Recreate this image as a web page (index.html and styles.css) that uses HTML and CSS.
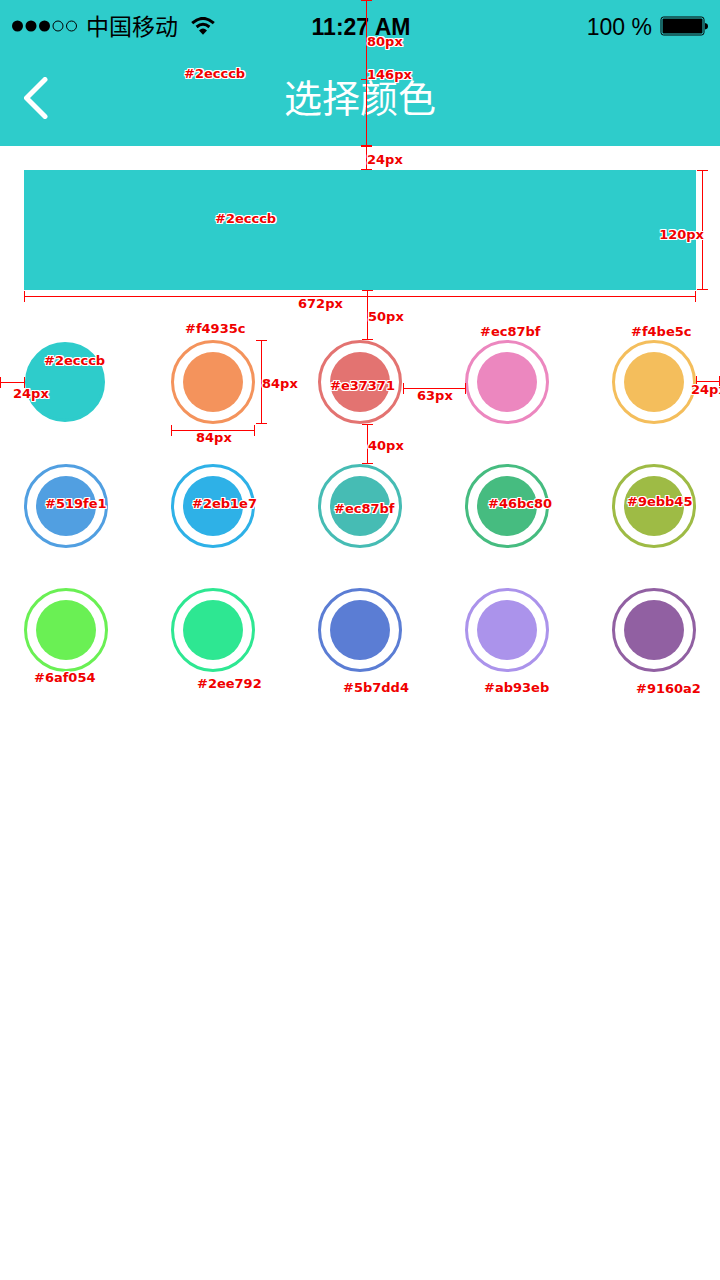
FILE: index.html
```html
<!DOCTYPE html>
<html lang="zh-CN">
<head>
<meta charset="utf-8">
<meta name="viewport" content="width=device-width, initial-scale=1">
<title>选择颜色</title>
<link rel="stylesheet" href="styles.css">
</head>
<body>
<header class="header">
  <div class="status">
    <div class="carrier">
      <svg width="66" height="12" viewBox="0 0 66 12" aria-hidden="true">
        <circle cx="5.5" cy="6" r="5.5"/><circle cx="19" cy="6" r="5.5"/><circle cx="32.5" cy="6" r="5.5"/>
        <circle class="hollow" cx="46" cy="6" r="5"/><circle class="hollow" cx="59.5" cy="6" r="5"/>
      </svg>
      <span class="carrier-name">中国移动</span>
      <svg class="wifi" width="24" height="18" viewBox="0 0 24 18" aria-hidden="true">
        <path class="arc" d="M1.2 6.2Q12 -3.4 22.8 6.2M5.6 10Q12 4.6 18.4 10"/>
        <path d="M8 13.4Q12 9.8 16 13.4L12 17.8Z"/>
      </svg>
    </div>
    <time class="time">11:27 AM</time>
    <div class="power">
      <span>100 %</span>
      <svg width="48" height="20" viewBox="0 0 48 20" aria-hidden="true">
        <rect class="hollow" x="1" y="1" width="43" height="18" rx="2.5"/>
        <rect x="2.5" y="2.5" width="40" height="15" rx="1"/>
        <path d="M45 7q3 .5 3 3.200t-3 3.200z"/>
      </svg>
    </div>
  </div>
  <nav class="nav">
    <button class="back" type="button" aria-label="返回">
      <svg width="24" height="42" viewBox="0 0 24 42" aria-hidden="true"><path d="M21 2.500L2.500 21L21 39.500"/></svg>
    </button>
    <h1 class="title">选择颜色</h1>
  </nav>
  <i class="rule vertical header-80"></i>
  <i class="rule vertical header-146"></i>
  <span class="note note-80">80px</span>
  <span class="note note-146">146px</span>
  <span class="note note-header">#2ecccb</span>
</header>

<main class="content">
  <div class="preview">
    <i class="rule vertical gap-24"></i>
    <span class="note note-gap-24">24px</span>
    <span class="note note-preview">#2ecccb</span>
    <i class="rule vertical height-120"></i>
    <span class="note note-120">120px</span>
    <i class="rule horizontal width-672"></i>
    <span class="note note-672">672px</span>
    <i class="rule vertical gap-50"></i>
    <span class="note note-50">50px</span>
  </div>

  <div class="palette" role="radiogroup" aria-label="选择颜色">
    <label class="swatch teal"><input type="radio" name="color" checked><span class="note">#2ecccb</span></label>
    <label class="swatch orange"><input type="radio" name="color"><span class="note">#f4935c</span></label>
    <label class="swatch red"><input type="radio" name="color"><span class="note">#e37371</span></label>
    <label class="swatch pink"><input type="radio" name="color"><span class="note">#ec87bf</span></label>
    <label class="swatch amber"><input type="radio" name="color"><span class="note">#f4be5c</span></label>
    <label class="swatch blue"><input type="radio" name="color"><span class="note">#519fe1</span></label>
    <label class="swatch sky"><input type="radio" name="color"><span class="note">#2eb1e7</span></label>
    <label class="swatch sea"><input type="radio" name="color"><span class="note">#ec87bf</span></label>
    <label class="swatch green"><input type="radio" name="color"><span class="note">#46bc80</span></label>
    <label class="swatch olive"><input type="radio" name="color"><span class="note">#9ebb45</span></label>
    <label class="swatch lime"><input type="radio" name="color"><span class="note">#6af054</span></label>
    <label class="swatch mint"><input type="radio" name="color"><span class="note">#2ee792</span></label>
    <label class="swatch indigo"><input type="radio" name="color"><span class="note">#5b7dd4</span></label>
    <label class="swatch lilac"><input type="radio" name="color"><span class="note">#ab93eb</span></label>
    <label class="swatch purple"><input type="radio" name="color"><span class="note">#9160a2</span></label>

    <i class="rule horizontal margin-left"></i>
    <span class="note note-left">24px</span>
    <i class="rule vertical swatch-height"></i>
    <span class="note note-swatch-height">84px</span>
    <i class="rule horizontal swatch-width"></i>
    <span class="note note-swatch-width">84px</span>
    <i class="rule horizontal gap-63"></i>
    <span class="note note-63">63px</span>
    <i class="rule vertical gap-40"></i>
    <span class="note note-40">40px</span>
    <i class="rule horizontal margin-right"></i>
    <span class="note note-right">24px</span>
  </div>
</main>
</body>
</html>
```
FILE: styles.css
```css
* { box-sizing: border-box; }

body {
  margin: 0;
  background: #fff;
  color: #000;
  font-family: "Liberation Sans", "Noto Sans CJK SC", sans-serif;
  overflow-x: hidden;
}

/* Header */
.header {
  position: relative;
  background: #2ecccb;
}

.status {
  display: grid;
  grid-template-columns: 1fr auto 1fr;
  align-items: center;
  height: 52px;
  padding: 0 12px;
  font-size: 24px;
  line-height: 28px;
}

.carrier, .power {
  display: flex;
  align-items: center;
  gap: 8px;
}

.carrier-name {
  padding-bottom: 2px;
  font-family: "Noto Sans CJK SC", sans-serif;
  font-size: 23px;
}

.wifi { margin-left: 5px; }
.arc { fill: none; stroke: #000; stroke-width: 3; }
.hollow { fill: none; stroke: #000; stroke-width: 1; }
.time { padding: 2px 0 0 2px; font-size: 23px; font-weight: 700; }
.power { justify-content: flex-end; }
.power span { padding-top: 2px; font-size: 23px; }

.nav {
  display: grid;
  grid-template-columns: 72px 1fr 72px;
  align-items: center;
  height: 94px;
  padding-bottom: 2px;
}

.back {
  display: flex;
  padding: 0 24px;
  border: 0;
  background: none;
}

.back path {
  fill: none;
  stroke: #fff;
  stroke-width: 5;
  stroke-linecap: round;
  stroke-linejoin: round;
}

.title {
  margin: 0;
  padding-bottom: 4px;
  color: #fff;
  font-family: "Noto Sans CJK SC", sans-serif;
  font-size: 38px;
  font-weight: 400;
  line-height: 48px;
  text-align: center;
}

/* Preview and palette */
.content {
  display: grid;
  gap: 50px;
  padding: 24px;
}

.preview {
  position: relative;
  height: 120px;
  background: #2ecccb;
}

.palette {
  position: relative;
  display: grid;
  grid-template-columns: repeat(5, 84px);
  justify-content: space-between;
  row-gap: 40px;
}

.swatch {
  position: relative;
  height: 84px;
}

.swatch input {
  appearance: none;
  display: block;
  width: 84px;
  height: 84px;
  margin: 0;
  padding: 9px;
  border: 3px solid currentColor;
  border-radius: 50%;
  background: currentColor content-box;
  color: inherit;
}

.swatch input:checked {
  width: 80px;
  height: 80px;
  margin: 2px 1px;
  background-clip: border-box;
}

.teal { color: #2ecccb; }
.orange { color: #f4935c; }
.red { color: #e37371; }
.pink { color: #ec87bf; }
.amber { color: #f4be5c; }
.blue { color: #519fe1; }
.sky { color: #2eb1e7; }
.sea { color: #46bcb4; }
.green { color: #46bc80; }
.olive { color: #9ebb45; }
.lime { color: #6af054; }
.mint { color: #2ee792; }
.indigo { color: #5b7dd4; }
.lilac { color: #ab93eb; }
.purple { color: #9160a2; }

/* Measurement notes */
.note {
  position: absolute;
  z-index: 2;
  margin: 1px 0 0 1px;
  color: #f00000;
  font-family: "DejaVu Sans", sans-serif;
  font-size: 13px;
  font-weight: 700;
  line-height: 16px;
  white-space: nowrap;
  text-shadow: 1px 0 #fff, -1px 0 #fff, 0 1px #fff, 0 -1px #fff,
    1px 1px #fff, -1px -1px #fff, 1px -1px #fff, -1px 1px #fff;
}

.rule { position: absolute; z-index: 1; }

.vertical {
  width: 11px;
  border: solid #f00;
  border-width: 1px 0;
  background: linear-gradient(#f00, #f00) center / 1px 100% no-repeat;
}

.horizontal {
  height: 11px;
  border: solid #f00;
  border-width: 0 1px;
  background: linear-gradient(#f00, #f00) center / 100% 1px no-repeat;
}

.header-80 { left: calc(50% + 1px); top: 0; height: 80px; }
.header-146 { left: calc(50% + 1px); top: 0; height: 146px; }
.note-80 { left: calc(50% + 6px); top: 33px; }
.note-146 { left: calc(50% + 6px); top: 66px; }
.note-header { left: 183px; top: 65px; }

.gap-24 { left: calc(50% + 1px); top: -24px; height: 24px; }
.note-gap-24 { left: calc(50% + 6px); top: -19px; }
.note-preview { left: 190px; top: 40px; }
.height-120 { right: -12px; top: 0; height: 120px; }
.note-120 { right: -8px; top: 56px; }
.width-672 { left: 0; right: 0; top: 121px; }
.note-672 { left: 273px; top: 125px; }
.gap-50 { left: calc(50% + 2px); top: 120px; height: 50px; }
.note-50 { left: calc(50% + 7px); top: 138px; }

.margin-left { left: -24px; top: 37px; width: 25px; }
.note-left { left: -12px; top: 45px; }
.swatch-height { left: 232px; top: 0; height: 84px; }
.note-swatch-height { left: 237px; top: 35px; }
.swatch-width { left: 147px; top: 85px; width: 84px; }
.note-swatch-width { left: 171px; top: 89px; }
.gap-63 { left: 379px; top: 43px; width: 63px; }
.note-63 { left: 392px; top: 47px; }
.gap-40 { left: calc(50% + 2px); top: 84px; height: 40px; }
.note-40 { left: calc(50% + 7px); top: 97px; }
.margin-right { right: -24px; top: 36px; width: 24px; }
.note-right { left: calc(100% - 6px); top: 41px; }

.teal .note { left: 19px; top: 12px; }
.orange .note { left: 13px; top: -20px; }
.red .note { left: 11px; top: 37px; }
.pink .note { left: 14px; top: -17px; }
.amber .note { left: 18px; top: -17px; }
.blue .note { left: 20px; top: 31px; }
.sky .note { left: 20px; top: 31px; }
.sea .note { left: 15px; top: 36px; }
.green .note { left: 22px; top: 31px; }
.olive .note { left: 14px; top: 29px; }
.lime .note { left: 9px; top: 81px; }
.mint .note { left: 25px; top: 87px; }
.indigo .note { left: 24px; top: 91px; }
.lilac .note { left: 18px; top: 91px; }
.purple .note { left: 23px; top: 92px; }
```
